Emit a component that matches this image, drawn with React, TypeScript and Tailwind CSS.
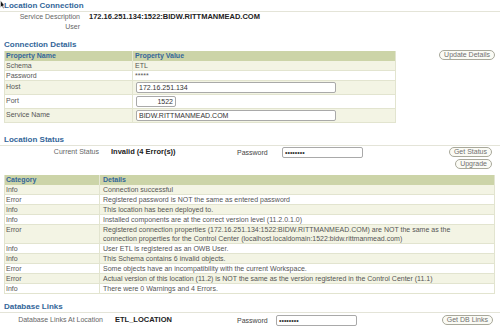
import React from 'react';

const messages: { cat: string; text: React.ReactNode }[] = [
	{ cat: 'Info', text: 'Connection successful' },
	{ cat: 'Error', text: 'Registered password is NOT the same as entered password' },
	{ cat: 'Info', text: 'This location has been deployed to.' },
	{ cat: 'Info', text: 'Installed components are at the correct version level (11.2.0.1.0)' },
	{
		cat: 'Error',
		text: (
			<>
				Registered connection properties (172.16.251.134:1522:BIDW.RITTMANMEAD.COM) are NOT the same as the
				<br />
				connection properties for the Control Center (localhost.localdomain:1522:bidw.rittmanmead.com)
			</>
		),
	},
	{ cat: 'Info', text: 'User ETL is registered as an OWB User.' },
	{ cat: 'Info', text: 'This Schema contains 6 invalid objects.' },
	{ cat: 'Error', text: 'Some objects have an incompatibility with the current Workspace.' },
	{ cat: 'Error', text: 'Actual version of this location (11.2) is NOT the same as the version registered in the Control Center (11.1)' },
	{ cat: 'Info', text: 'There were 0 Warnings and 4 Errors.' },
];

function Heading({ children, line = true, className = '' }: { children: React.ReactNode; line?: boolean; className?: string }) {
	return (
		<div
			className={`pl-[4px] text-[8px] font-bold leading-[10px] text-[#336699] ${line ? 'border-b border-[#e4e4d8]' : ''} ${className}`}
		>
			{children}
		</div>
	);
}

function Btn({ children }: { children: React.ReactNode }) {
	return (
		<button className="flex h-[10px] items-center rounded-full border border-[#a8a89a] bg-[#fbfbf5] px-[4px] text-[7px] leading-[8px] text-[#707070]">
			{children}
		</button>
	);
}

function Field({ value, className = '', type = 'text' }: { value: string; className?: string; type?: string }) {
	return (
		<input
			type={type}
			readOnly
			defaultValue={value}
			className={`h-[11px] rounded-[2px] border border-[#a9a9a9] bg-white px-[2px] text-[7px] leading-[9px] text-[#333] outline-none ${className}`}
		/>
	);
}

export default function App() {
	return (
		<div className="relative h-[333px] w-[500px] overflow-hidden bg-white pt-[1px] font-['Liberation_Sans',Arial,sans-serif] text-[7px] text-[#555]">
			<svg className="absolute left-0 top-0" width="5" height="9" viewBox="0 0 5 9">
				<path d="M0.5 0.5 L0.5 7.5 L2 6 L3.2 8.5 L4 8.1 L2.9 5.7 L4.6 5.6 Z" fill="#111" stroke="#fff" strokeWidth="0.5" />
			</svg>

			<Heading>Location Connection</Heading>
			<div className="flex leading-[10px]">
				<div className="w-[80px] text-right text-[#666]">Service Description</div>
				<div className="ml-[9px] text-[7.5px] font-bold text-[#222]">172.16.251.134:1522:BIDW.RITTMANMEAD.COM</div>
			</div>
			<div className="flex leading-[10px]">
				<div className="w-[80px] text-right text-[#666]">User</div>
			</div>

			<Heading line={false} className="mt-[8px]">
				Connection Details
			</Heading>
			<div className="mt-[1px] flex">
				<div className="ml-[4px] w-[392px] border-x border-b border-[#e2e4cf]">
					<div className="grid h-[10px] grid-cols-[128px_1fr] bg-[#ccd4a8] font-bold leading-[10px] text-[#336699]">
						<div className="border-r border-[#e6e8d6] pl-[1px]">Property Name</div>
						<div className="pl-[2px]">Property Value</div>
					</div>
					<div className="grid h-[10px] grid-cols-[128px_1fr] border-b border-[#e2e4cf] bg-[#f3f4e4] leading-[9px]">
						<div className="border-r border-[#e2e4cf] pl-[1px]">Schema</div>
						<div className="pl-[2px]">ETL</div>
					</div>
					<div className="grid h-[10px] grid-cols-[128px_1fr] border-b border-[#e2e4cf] bg-white leading-[9px]">
						<div className="border-r border-[#e2e4cf] pl-[1px]">Password</div>
						<div className="pl-[2px]">*****</div>
					</div>
					<div className="grid h-[14px] grid-cols-[128px_1fr] border-b border-[#e2e4cf] bg-[#f3f4e4]">
						<div className="flex items-center border-r border-[#e2e4cf] pl-[1px]">Host</div>
						<div className="flex items-center pl-[3px]">
							<Field value="172.16.251.134" className="w-[200px]" />
						</div>
					</div>
					<div className="grid h-[14px] grid-cols-[128px_1fr] border-b border-[#e2e4cf] bg-white">
						<div className="flex items-center border-r border-[#e2e4cf] pl-[1px]">Port</div>
						<div className="flex items-center pl-[3px]">
							<Field value="1522" className="w-[40px] text-right" />
						</div>
					</div>
					<div className="grid h-[13px] grid-cols-[128px_1fr] bg-[#f3f4e4]">
						<div className="flex items-center border-r border-[#e2e4cf] pl-[1px]">Service Name</div>
						<div className="flex items-center pl-[3px]">
							<Field value="BIDW.RITTMANMEAD.COM" className="w-[200px]" />
						</div>
					</div>
				</div>
				<div className="-mt-[1px] flex flex-1 justify-end pr-[5px]">
					<Btn>Update Details</Btn>
				</div>
			</div>

			<Heading className="mt-[12px]">Location Status</Heading>
			<div className="flex items-start">
				<div className="w-[99px] pt-[1px] text-right leading-[10px] text-[#666]">Current Status</div>
				<div className="ml-[12px] w-[126px] pt-[1px] text-[7.5px] font-bold leading-[10px] text-[#222]">Invalid (4 Error(s))</div>
				<div className="w-[45px] pt-[2px] leading-[10px] text-[#444]">Password</div>
				<Field type="password" value="xxxxxxxx" className="mt-[1px] w-[81px]" />
				<div className="ml-auto mr-[8px] mt-[1px] flex flex-col items-end gap-[2px]">
					<Btn>Get Status</Btn>
					<Btn>Upgrade</Btn>
				</div>
			</div>

			<div className="ml-[4px] mt-[6px] w-[491px] border-x border-b border-[#e2e4cf]">
				<div className="grid h-[10px] grid-cols-[95px_1fr] bg-[#ccd4a8] font-bold leading-[10px] text-[#336699]">
					<div className="border-r border-[#e6e8d6] pl-[1px]">Category</div>
					<div className="pl-[3px]">Details</div>
				</div>
				{messages.map((m, i) => (
					<div
						key={i}
						className={`grid grid-cols-[95px_1fr] leading-[9px] ${i < messages.length - 1 ? 'border-b border-[#e2e4cf]' : ''} ${i % 2 === 0 ? 'bg-[#f3f4e4]' : 'bg-white'}`}
					>
						<div className="border-r border-[#e2e4cf] pl-[1px]">{m.cat}</div>
						<div className="pl-[3px]">{m.text}</div>
					</div>
				))}
			</div>

			<Heading className="mt-[8px]">Database Links</Heading>
			<div className="flex items-start">
				<div className="w-[103px] pt-[2px] text-right leading-[10px] text-[#666]">Database Links At Location</div>
				<div className="ml-[12px] w-[122px] pt-[2px] text-[7.5px] font-bold leading-[10px] text-[#222]">ETL_LOCATION</div>
				<div className="w-[39px] pt-[3px] leading-[10px] text-[#444]">Password</div>
				<Field type="password" value="xxxxxxxx" className="mt-[2px] w-[81px]" />
				<div className="ml-auto mr-[7px] mt-[2px]">
					<Btn>Get DB Links</Btn>
				</div>
			</div>
		</div>
	);
}
